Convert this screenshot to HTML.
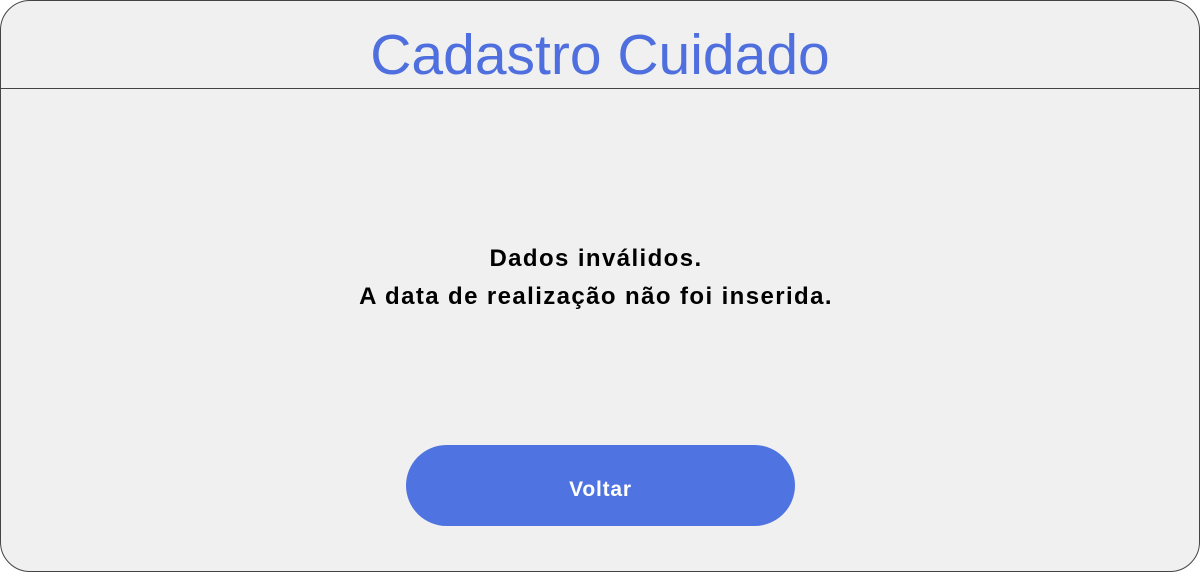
<!DOCTYPE html>
<html><head><meta charset="utf-8"><style>
html,body{margin:0;padding:0;width:1200px;height:572px;background:#fff;overflow:hidden}
.box{position:absolute;left:0;top:0;width:1198px;height:570px;border:1px solid #444;border-radius:30px;background:#f0f0f0;overflow:hidden}
.hdr{position:absolute;left:0;top:0;width:1198px;height:87px;border-bottom:1px solid #444}
.title{position:absolute;left:0;width:1198px;top:21px;text-align:center;font:57px/66px "Liberation Sans",sans-serif;color:#4f6fdf}
.msg{position:absolute;left:-4px;width:1198px;top:239px;text-align:center;font:bold 24px/38px "Liberation Sans",sans-serif;color:#000;letter-spacing:1.4px}
.btn{position:absolute;left:405px;top:444px;width:389px;height:81px;border-radius:41px;background:#4f73e0;color:#fff;text-align:center;font:bold 21px/89px "Liberation Sans",sans-serif;letter-spacing:0.8px}
</style></head><body>
<div class="box">
<div class="hdr"><div class="title">Cadastro Cuidado</div></div>
<div class="msg">Dados inválidos.<br>A data de realização não foi inserida.</div>
<div class="btn">Voltar</div>
</div>
</body></html>
